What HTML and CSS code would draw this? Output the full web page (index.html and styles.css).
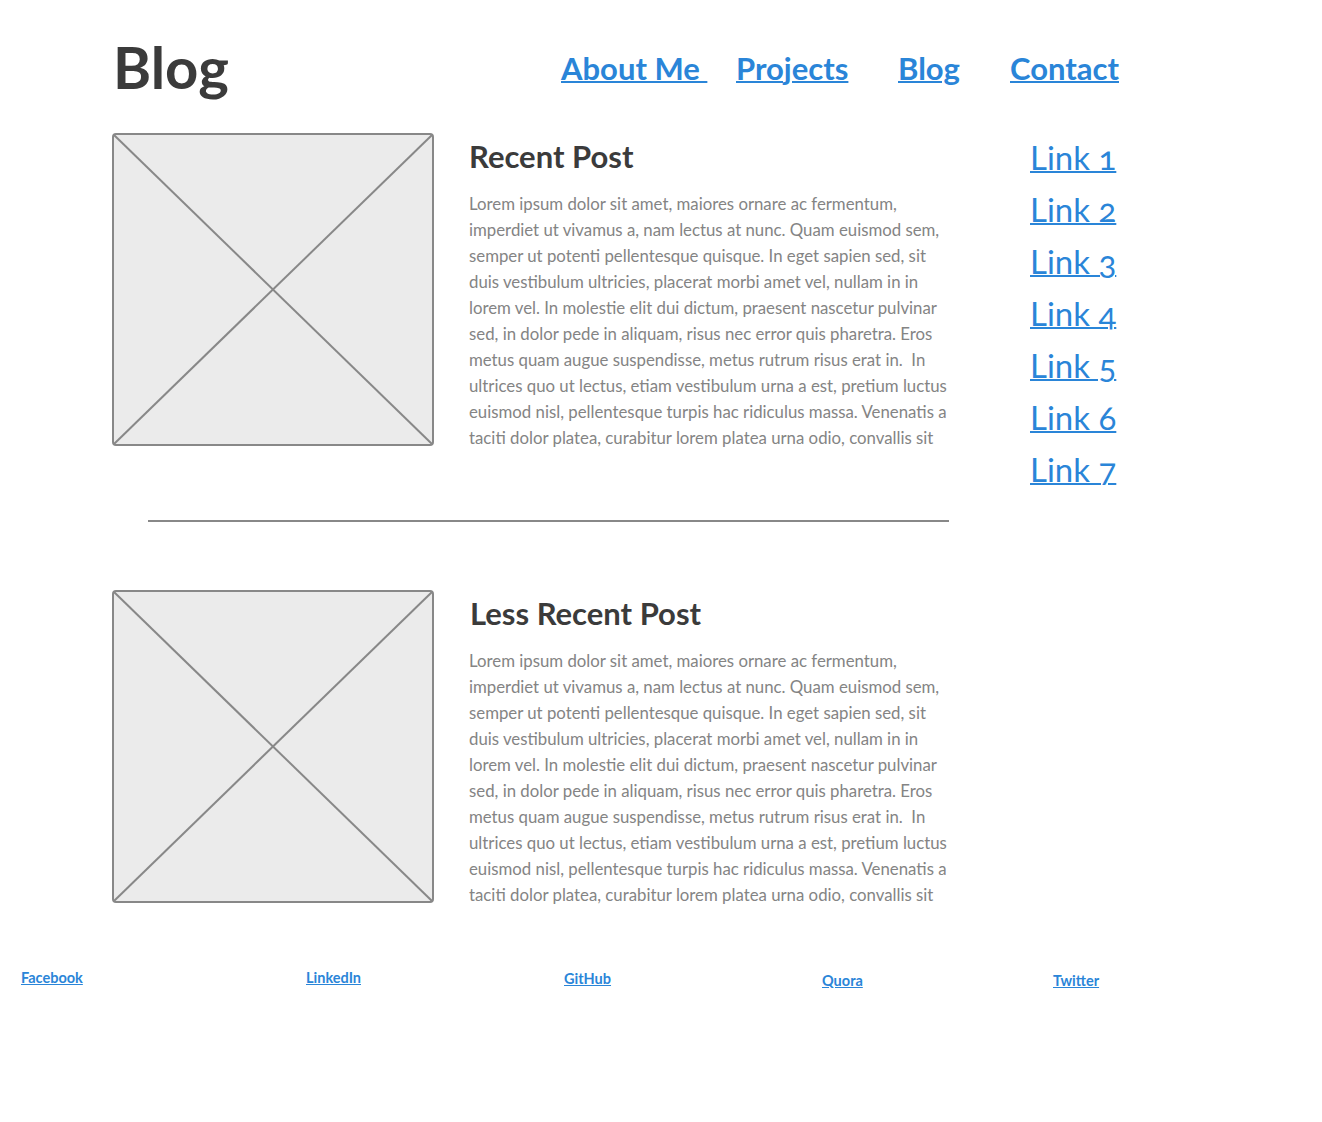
FILE: index.html
```html
<!DOCTYPE html>
<html lang="en">
<head>
<meta charset="utf-8">
<title>Blog</title>
<link rel="stylesheet" href="styles.css">
</head>
<body>
<div class="page">
  <header class="header">
    <h1 class="site-title">Blog</h1>
    <nav class="nav">
      <a href="#">About Me&nbsp;</a>
      <a href="#">Projects</a>
      <a href="#">Blog</a>
      <a href="#">Contact</a>
    </nav>
  </header>
  <main class="main">
    <div class="posts">
      <article class="post">
        <svg class="thumb" width="322" height="313" viewBox="0 0 322 313">
          <rect x="1" y="1" width="320" height="311" rx="3" fill="#ebebeb" stroke="#888" stroke-width="2"/>
          <line x1="2" y1="2" x2="320" y2="311" stroke="#888" stroke-width="2"/>
          <line x1="320" y1="2" x2="2" y2="311" stroke="#888" stroke-width="2"/>
        </svg>
        <div class="post-body">
          <h2 class="post-title">Recent Post</h2>
          <p class="post-text">Lorem ipsum dolor sit amet, maiores ornare ac fermentum,<br>imperdiet ut vivamus a, nam lectus at nunc. Quam euismod sem,<br>semper ut potenti pellentesque quisque. In eget sapien sed, sit<br>duis vestibulum ultricies, placerat morbi amet vel, nullam in in<br>lorem vel. In molestie elit dui dictum, praesent nascetur pulvinar<br>sed, in dolor pede in aliquam, risus nec error quis pharetra. Eros<br>metus quam augue suspendisse, metus rutrum risus erat in.&nbsp; In<br>ultrices quo ut lectus, etiam vestibulum urna a est, pretium luctus<br>euismod nisl, pellentesque turpis hac ridiculus massa. Venenatis a<br>taciti dolor platea, curabitur lorem platea urna odio, convallis sit</p>
        </div>
      </article>
      <hr class="divider">
      <article class="post">
        <svg class="thumb" width="322" height="313" viewBox="0 0 322 313">
          <rect x="1" y="1" width="320" height="311" rx="3" fill="#ebebeb" stroke="#888" stroke-width="2"/>
          <line x1="2" y1="2" x2="320" y2="311" stroke="#888" stroke-width="2"/>
          <line x1="320" y1="2" x2="2" y2="311" stroke="#888" stroke-width="2"/>
        </svg>
        <div class="post-body">
          <h2 class="post-title post-title--second">Less Recent Post</h2>
          <p class="post-text">Lorem ipsum dolor sit amet, maiores ornare ac fermentum,<br>imperdiet ut vivamus a, nam lectus at nunc. Quam euismod sem,<br>semper ut potenti pellentesque quisque. In eget sapien sed, sit<br>duis vestibulum ultricies, placerat morbi amet vel, nullam in in<br>lorem vel. In molestie elit dui dictum, praesent nascetur pulvinar<br>sed, in dolor pede in aliquam, risus nec error quis pharetra. Eros<br>metus quam augue suspendisse, metus rutrum risus erat in.&nbsp; In<br>ultrices quo ut lectus, etiam vestibulum urna a est, pretium luctus<br>euismod nisl, pellentesque turpis hac ridiculus massa. Venenatis a<br>taciti dolor platea, curabitur lorem platea urna odio, convallis sit</p>
        </div>
      </article>
    </div>
    <aside class="sidebar">
      <a href="#">Link 1</a>
      <a href="#">Link 2</a>
      <a href="#">Link 3</a>
      <a href="#">Link 4</a>
      <a href="#">Link 5</a>
      <a href="#">Link 6</a>
      <a href="#">Link 7</a>
    </aside>
  </main>
</div>
<footer class="footer">
  <a href="#">Facebook</a>
  <a href="#">LinkedIn</a>
  <a href="#" class="low1">GitHub</a>
  <a href="#" class="low3">Quora</a>
  <a href="#" class="low3">Twitter</a>
</footer>
</body>
</html>
```
FILE: styles.css
```css
html, body {
  margin: 0;
  padding: 0;
  background: #fff;
}
body {
  font-family: Lato, "Open Sans", "Liberation Sans", sans-serif;
  color: #3b3b3b;
}
a {
  color: #2a85d8;
  text-decoration: underline;
}
.page {
  padding-left: 112px;
}
.header {
  display: flex;
  align-items: flex-start;
  padding-top: 38px;
}
.site-title {
  margin: 0 0 0 1px;
  width: 448px;
  font-size: 58px;
  line-height: 58px;
  font-weight: 700;
  color: #3b3b3b;
}
.nav {
  display: grid;
  grid-template-columns: 175px 162px 112px auto;
  margin-top: 15px;
}
.nav a {
  font-size: 31px;
  line-height: 31px;
  font-weight: 700;
  text-decoration-thickness: 2px;
}
.main {
  display: grid;
  grid-template-columns: 838px auto;
  column-gap: 80px;
  margin-top: 37px;
}
.post {
  display: flex;
  align-items: flex-start;
  gap: 35px;
}
.thumb {
  display: block;
  flex: none;
}
.post-title {
  margin: 8px 0 0;
  font-size: 31px;
  line-height: 30px;
  font-weight: 700;
  color: #3b3b3b;
}
.post-title--second {
  margin-top: 8px;
  padding-left: 1px;
}
.post-text {
  margin: 20px 0 0;
  font-size: 16.8px;
  line-height: 26px;
  color: #848484;
  white-space: nowrap;
}
.post-title--second + .post-text {
  margin-top: 20px;
}
.divider {
  border: 0;
  height: 2px;
  background: #888;
  margin: 69px 0 68px 36px;
  width: 801px;
}
.sidebar {
  display: flex;
  flex-direction: column;
  align-items: flex-start;
  margin-top: -2px;
}
.sidebar a {
  font-size: 33px;
  line-height: 52px;
  font-weight: 400;
  font-variant-numeric: oldstyle-nums;
  text-decoration-thickness: 2px;
}
.footer {
  display: grid;
  grid-template-columns: 285px 258px 258px 231px auto;
  align-items: start;
  padding-left: 21px;
  margin-top: 60px;
}
.footer a {
  font-size: 14.5px;
  line-height: 20px;
  font-weight: 700;
  justify-self: start;
}
.footer .low1 {
  margin-top: 1px;
}
.footer .low3 {
  margin-top: 3px;
}
```
